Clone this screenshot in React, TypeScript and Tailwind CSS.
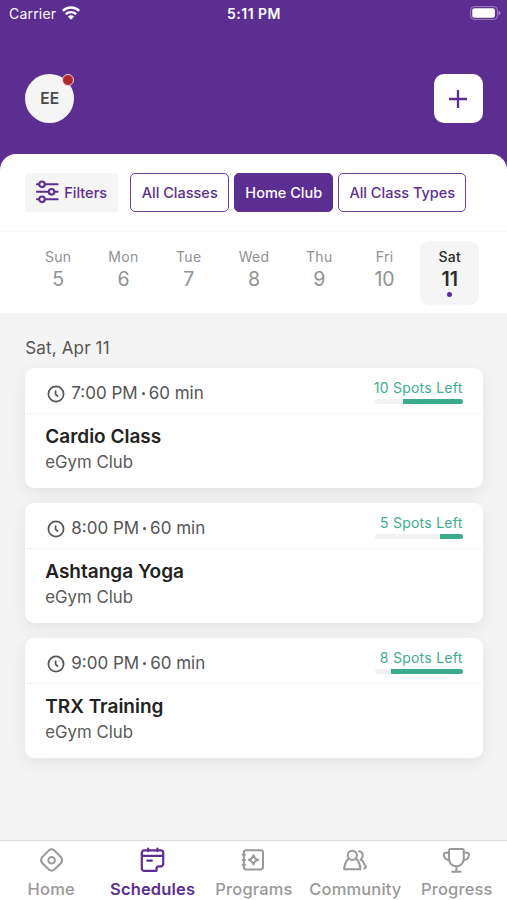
import clsx from "clsx";
import type { ReactNode } from "react";

interface GymClass {
  time: string;
  duration: string;
  title: string;
  club: string;
  spots: number;
  /** Width of the filled part of the bar, in percent */
  fill: number;
}

const DAYS = [
  { name: "Sun", date: 5 },
  { name: "Mon", date: 6 },
  { name: "Tue", date: 7 },
  { name: "Wed", date: 8 },
  { name: "Thu", date: 9 },
  { name: "Fri", date: 10 },
  { name: "Sat", date: 11 },
];

const CLASSES: GymClass[] = [
  { time: "7:00 PM", duration: "60 min", title: "Cardio Class", club: "eGym Club", spots: 10, fill: 67.5 },
  { time: "8:00 PM", duration: "60 min", title: "Ashtanga Yoga", club: "eGym Club", spots: 5, fill: 26 },
  { time: "9:00 PM", duration: "60 min", title: "TRX Training", club: "eGym Club", spots: 8, fill: 81.5 },
];

// ─── Icons ────────────────────────────────────────────────────────────

function WifiIcon() {
  return (
    <svg width="18" height="14" viewBox="0 0 18 14" fill="none" stroke="white">
      <path d="M.8 4.9C5.3.4 12.7.4 17.2 4.9" strokeWidth="2.5" />
      <path d="M3.8 8.2c3-2.8 7.4-2.8 10.4 0" strokeWidth="2.3" />
      <path d="M9 13.7 5.9 10.5c1.7-1.6 4.5-1.6 6.2 0z" fill="white" stroke="none" />
    </svg>
  );
}

function BatteryIcon() {
  return (
    <svg width="31" height="14" viewBox="0 0 31 14" fill="none">
      <rect x="0.6" y="0.6" width="26.8" height="12.8" rx="3.6" stroke="white" strokeOpacity="0.4" />
      <rect x="2.3" y="2.2" width="22.6" height="9.6" rx="2" fill="white" />
      <path d="M28.6 4.8c1.1.4 1.7 1.2 1.7 2.2s-.6 1.8-1.7 2.2z" fill="white" fillOpacity="0.5" />
    </svg>
  );
}

function FiltersIcon() {
  return (
    <svg width="24" height="24" viewBox="0 0 24 24" fill="none" stroke="currentColor" strokeWidth="2.1" strokeLinecap="round">
      <path d="M2 4.3h2M10 4.3h12.6" />
      <circle cx="7" cy="4.3" r="2.8" />
      <path d="M2 11.8h11.6M19.6 11.8h3" />
      <circle cx="16.6" cy="11.8" r="2.8" />
      <path d="M2 19.3h2M10 19.3h12.6" />
      <circle cx="7" cy="19.3" r="2.8" />
    </svg>
  );
}

function ClockIcon() {
  return (
    <svg width="18" height="18" viewBox="0 0 18 18" fill="none" stroke="currentColor" strokeWidth="1.7" strokeLinecap="round" strokeLinejoin="round">
      <circle cx="9" cy="9" r="7.6" />
      <path d="M8.6 6v3.3l1.9 1.9" />
    </svg>
  );
}

function NavIcon({ children }: { children: ReactNode }) {
  return (
    <svg width="28" height="28" viewBox="0 0 28 28" fill="none" stroke="currentColor" strokeWidth="2" strokeLinecap="round" strokeLinejoin="round">
      {children}
    </svg>
  );
}

const NAV = [
  {
    label: "Home",
    icon: (
      <NavIcon>
        <path d="M12.2 4.1q2.4-1.8 4.8 0l7.1 7.2q2 2.9 0 5.8l-7.1 6.7q-2.4 1.8-4.8 0l-7.1-6.7q-2-2.9 0-5.8z" />
        <circle cx="14.6" cy="14.2" r="3.3" />
      </NavIcon>
    ),
  },
  {
    label: "Schedules",
    active: true,
    icon: (
      <NavIcon>
        <path
          strokeWidth="2.2"
          d="M17.9 24.9H6.2a2.4 2.4 0 0 1-2.4-2.4V6.7a2.4 2.4 0 0 1 2.4-2.4h16.6a2.4 2.4 0 0 1 2.4 2.4v11.2c0 .8-.2 1.2-.8 1.8l-.6.6h-3.2a2 2 0 0 0-2 2v2.2c-.2.3-.3.4-.5.4zM3.8 9.8h21.4M10.2 2.6v2.6M19.4 2.6v2.6M9.3 14.6h4.6"
        />
      </NavIcon>
    ),
  },
  {
    label: "Programs",
    icon: (
      <NavIcon>
        <rect x="4.8" y="4.3" width="19.2" height="19.2" rx="2.4" />
        <path d="M3.6 8.8h2.4M3.6 13.9h2.4M3.6 19h2.4" />
        <path d="M14.4 9.2q.9 3.8 4.7 4.7-3.8.9-4.7 4.7-.9-3.8-4.7-4.7 3.8-.9 4.7-4.7z" />
      </NavIcon>
    ),
  },
  {
    label: "Community",
    icon: (
      <NavIcon>
        <circle cx="11.3" cy="9.3" r="4.6" />
        <path d="M7.7 12.6c-2.4 1.9-4.2 4.9-4.5 10.7h16.2c-.3-5.8-2.1-8.8-4.5-10.7" />
        <path d="M17.9 5.2c2.5.3 3.9 2.2 3.9 4.6 0 1.7-.9 3-2.2 3.8 2.2.9 2.9 2 3.4 4 .3 1.2.6 1.7 1.5 2.3 1 .9.5 2.2-1.2 2.6" />
      </NavIcon>
    ),
  },
  {
    label: "Progress",
    icon: (
      <NavIcon>
        <path d="M8.6 3.1h11.6q1.6 0 1.6 1.6V12c0 5-3 8.2-7.4 8.2S7 17 7 12V4.7q0-1.6 1.6-1.6zM14.4 20.2v5M10.2 25.8h8.4" />
        <path d="M7 6.8H3.8c-1.6 0-2.2 1-1.9 2.6.5 2.8 2.4 4.5 5.4 4.8M21.8 6.8H25c1.6 0 2.2 1 1.9 2.6-.5 2.8-2.4 4.5-5.4 4.8" />
      </NavIcon>
    ),
  },
];

// ─── Header ───────────────────────────────────────────────────────────

function StatusBar() {
  return (
    <div className="grid h-[26px] grid-cols-3 items-center pr-[6px] pl-[9px] text-white">
      <div className="flex items-center gap-1.5">
        <span className="text-[14px] tracking-[0.2px]">Carrier</span>
        <WifiIcon />
      </div>
      <span className="pr-0.5 text-center text-[14px] font-semibold tracking-[0.5px]">5:11 PM</span>
      <div className="flex justify-end">
        <BatteryIcon />
      </div>
    </div>
  );
}

function Header() {
  return (
    <header className="h-[153.5px] bg-[#5c2e91]">
      <StatusBar />
      <div className="mt-[48px] flex justify-between pr-[24.5px] pl-[25.25px]">
        <div className="relative flex size-[49px] items-center justify-center rounded-full bg-[#f5f5f5] text-[15.5px] font-semibold text-[#4a4a4a]">
          EE
          <span className="absolute top-0 right-0 size-3 rounded-full border border-[#e6d5e2] bg-[#b3282d]" />
        </div>
        <button className="flex size-[49px] items-center justify-center rounded-[10px] bg-white text-[#5c2e91]">
          <svg width="18" height="18" viewBox="0 0 18 18" stroke="currentColor" strokeWidth="2.3">
            <path d="M9 0v18M0 9h18" />
          </svg>
        </button>
      </div>
    </header>
  );
}

// ─── Filters and dates ────────────────────────────────────────────────

function FilterButton({ label, active, className }: { label: string; active?: boolean; className: string }) {
  return (
    <button
      className={clsx(
        "h-[39px] rounded-[5px] border pt-px text-[14.5px] font-medium",
        active ? "border-[#5c2e91] bg-[#5c2e91] text-white" : "border-[#6b419b] bg-white text-[#5c2e91]",
        className
      )}
    >
      {label}
    </button>
  );
}

function FilterBar() {
  return (
    <div className="flex h-[78px] items-center border-b border-[#f3f3f3] pl-[25.25px]">
      <button className="mr-3 flex h-[39px] w-[93px] items-center gap-[5px] rounded-[3px] bg-[#f5f5f5] pl-2.5 text-[14.5px] font-medium text-[#5c2e91]">
        <FiltersIcon />
        <span className="pt-px">Filters</span>
      </button>
      <div className="flex gap-[5px]">
        <FilterButton label="All Classes" className="w-[99px]" />
        <FilterButton label="Home Club" active className="w-[99px]" />
        <FilterButton label="All Class Types" className="w-[128px]" />
      </div>
    </div>
  );
}

function DateStrip() {
  return (
    <div className="grid h-[81.5px] grid-cols-7 pt-[9.5px] pr-[24.5px] pl-[25.5px]">
      {DAYS.map((day) => {
        const selected = day.name === "Sat";
        return (
          <div
            key={day.name}
            className={clsx(
              "mx-auto flex h-[64px] w-[59px] flex-col items-center rounded-[9px] pt-[6.5px]",
              selected ? "bg-[#f5f5f5] text-[#2b2b2b]" : "text-[#919191]"
            )}
          >
            <span className={clsx("text-[14px] leading-[18px] tracking-[0.3px]", selected && "font-medium")}>{day.name}</span>
            <span className={clsx("pt-px text-[19.5px] leading-[25px]", selected && "font-semibold")}>{day.date}</span>
            {selected && <span className="size-[5px] rounded-full bg-[#5c2e91]" />}
          </div>
        );
      })}
    </div>
  );
}

// ─── ClassCard ────────────────────────────────────────────────────────

function ClassCard({ item }: { item: GymClass }) {
  return (
    <article className="h-[120.5px] rounded-[9px] bg-white shadow-[0_5px_16px_rgba(0,0,0,0.07)]">
      <div className="mx-0.5 flex h-[46px] justify-between border-b border-[#f2f2f2] pr-[18px] pl-5">
        <div className="flex items-center gap-1.5 pt-[7px] text-[17px] text-[#555]">
          <ClockIcon />
          <span className="flex items-center gap-1">
            {item.time}
            <span className="size-[3px] rounded-full bg-[#555]" />
            {item.duration}
          </span>
        </div>
        <div className="flex flex-col items-end pt-[11px]">
          <span className="text-[14px] leading-[18px] tracking-[0.25px] text-[#3dae8e]">{item.spots} Spots Left</span>
          <div className="mt-[2.5px] flex h-[5px] w-[88px] justify-end rounded-full bg-[#f1f2f2]">
            <div className="h-full rounded-r-full bg-[#3aab8c]" style={{ width: `${item.fill}%` }} />
          </div>
        </div>
      </div>
      <div className="px-5 pt-[11px]">
        <h3 className="text-[19px] leading-6 font-semibold text-[#222]">{item.title}</h3>
        <p className="mt-[1.5px] text-[16.8px] leading-6 text-[#5a5a5a]">{item.club}</p>
      </div>
    </article>
  );
}

function BottomNav() {
  return (
    <nav className="grid h-[60px] grid-cols-5 border-t border-[#dedede] bg-white">
      {NAV.map((item) => (
        <div
          key={item.label}
          className={clsx(
            "flex flex-col items-center pt-[5px] text-[16.5px] tracking-[0.15px]",
            item.active ? "font-semibold text-[#5c2e91]" : "font-medium text-[#999]"
          )}
        >
          {item.icon}
          <span className="mt-[5px] pl-px leading-5">{item.label}</span>
        </div>
      ))}
    </nav>
  );
}

export default function App() {
  return (
    <div className="flex h-[900px] w-[507px] flex-col overflow-hidden bg-[#f4f4f4] font-['Inter',sans-serif]">
      <Header />
      <div className="bg-[#5c2e91]">
        <section className="rounded-t-[16px] bg-white">
          <FilterBar />
          <DateStrip />
        </section>
      </div>
      <main className="flex-1 pt-[23px] pr-[24.5px] pl-[25.25px]">
        <h2 className="text-[17px] leading-6 tracking-[0.15px] text-[#555]">Sat, Apr 11</h2>
        <div className="mt-[7.5px] flex flex-col gap-[14.7px]">
          {CLASSES.map((item) => (
            <ClassCard key={item.title} item={item} />
          ))}
        </div>
      </main>
      <BottomNav />
    </div>
  );
}
